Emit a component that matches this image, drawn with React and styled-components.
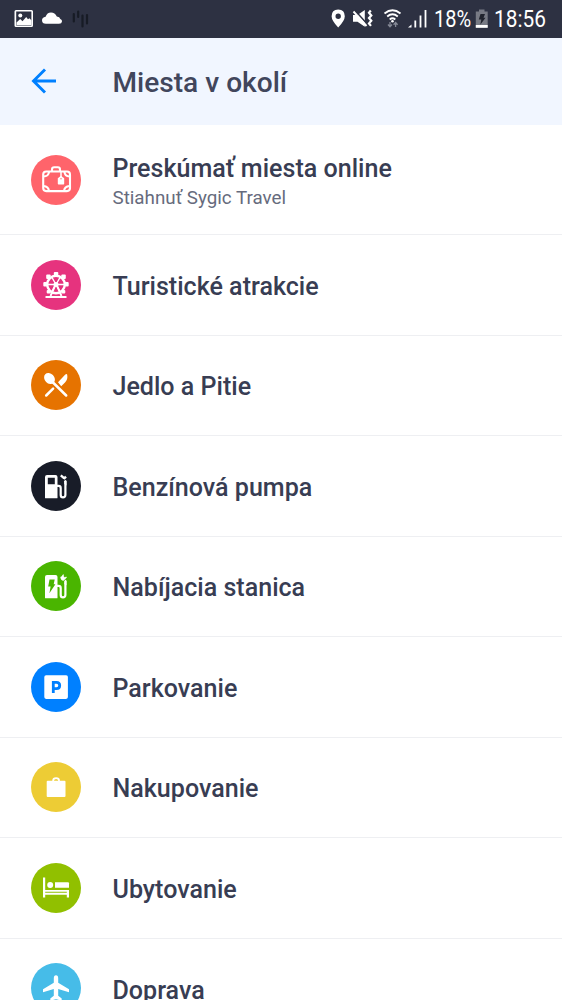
import React from 'react';
import styled, { createGlobalStyle } from 'styled-components';

const GlobalStyle = createGlobalStyle`
  * { box-sizing: border-box; }
  body { margin: 0; background: #fff; font-family: Roboto, "Noto Sans", sans-serif; }
`;

const Screen = styled.main`
  width: 562px;
  height: 1000px;
  overflow: hidden;
  background: #fff;
`;

const StatusBar = styled.div`
  height: 37.5px;
  display: flex;
  justify-content: space-between;
  background: #2d3142;
  color: #fff;
`;

const StatusIcons = styled.svg`
  display: block;
  width: ${(p) => p.$width}px;
  height: 37px;
  flex: none;
`;

const StatusGroup = styled.div`
  display: flex;
`;

const StatusText = styled.span`
  width: ${(p) => p.$width}px;
  font-size: 23px;
  line-height: 40px;
  white-space: nowrap;
  transform: scaleX(${(p) => p.$stretch});
  transform-origin: left;
`;

const Header = styled.header`
  height: 87.5px;
  display: flex;
  align-items: center;
  padding-left: 31px;
  background: #f1f6ff;
`;

const BackButton = styled.button`
  width: 81.5px;
  height: 26px;
  padding: 0;
  border: 0;
  background: none;
  text-align: left;
  svg { display: block; }
`;

const Title = styled.h1`
  margin: 4px 0 0;
  font-size: 28.1px;
  line-height: 36px;
  font-weight: 500;
  color: #41465c;
`;

const List = styled.ul`
  list-style: none;
  margin: 0;
  padding: 0;
`;

const Row = styled.li`
  height: ${(p) => (p.$tall ? 110 : 100.52)}px;
  display: flex;
  align-items: center;
  padding-left: 31px;
  border-bottom: 1px solid #eeeff2;
`;

const Badge = styled.svg`
  width: 50px;
  height: 50px;
  flex: none;
  margin-right: 31.5px;
  border-radius: 50%;
  background: ${(p) => p.$color};
`;

const Labels = styled.div`
  display: flex;
  flex-direction: column;
  padding-top: 4.3px;
`;

const Label = styled.span`
  font-size: 25.07px;
  line-height: 30px;
  font-weight: 500;
  color: #383d53;
`;

const Hint = styled.span`
  font-size: 18.8px;
  line-height: 24px;
  padding-top: 2px;
  color: #666b7d;
`;

const suitcase = (
  <g fill="none" stroke="#fff" strokeWidth="2.100">
    <rect x="12.200" y="16.500" width="26.800" height="19.600" rx="3" />
    <path d="M21 16.500v-2q0-2.200 2.200-2.200h3.600q2.200 0 2.200 2.200v2M18 17q-.5 4.500-5.500 4.500M12.500 31q5 .5 5.500 5M38.500 31q-5 .5-5.500 5M33.500 17q.3 4.200 5 4.500" />
    <path d="M30 17v6" strokeWidth="1.500" />
    <path d="M30 20.800l3.200 2.500v5.500q0 .7-.7.700h-5q-.7 0-.7-.7v-5.500z" fill="#fff" stroke="none" />
    <circle cx="30" cy="23.700" r=".7" fill="#ff646b" stroke="none" />
  </g>
);

const spokes = [0, 60, 120, 180, 240, 300];
const wheel = (
  <g fill="none" stroke="#fff">
    <circle cx="25" cy="24.500" r="8.800" strokeWidth="2.400" />
    {spokes.map((a) => (
      <g key={a} transform={`rotate(${a} 25 24.500)`}>
        <path d="M25 24.500h9" strokeWidth="1.400" />
      </g>
    ))}
    <g fill="#fff" stroke="none">
      <rect x="12.300" y="22" width="4.500" height="4.500" rx="1" />
      <rect x="33.200" y="22" width="4.500" height="4.500" rx="1" />
      <rect x="22.800" y="12" width="4.500" height="4" rx="1" />
      <rect x="15.200" y="14.500" width="4.500" height="4.500" rx="1" />
      <rect x="30.300" y="14.500" width="4.500" height="4.500" rx="1" />
      <rect x="15.700" y="30" width="4" height="3.500" rx="1" />
      <rect x="30.300" y="30" width="4" height="3.500" rx="1" />
      <circle cx="25" cy="24.500" r="2.500" />
      <path d="M15 36h20q.5 0 .5.500V38h-21v-1.500q0-.5.500-.5z" />
    </g>
    <path d="M24.300 25l-4.800 11M25.700 25l4.800 11" strokeWidth="1.900" />
  </g>
);

const cutlery = (
  <g fill="#fff">
    <ellipse cx="18.500" cy="18.500" rx="6" ry="4.800" transform="rotate(45 18.500 18.500)" />
    <path d="M20 20.500L35.200 35.500M15.200 35.500l6.900-6.900" stroke="#fff" strokeWidth="2.500" strokeLinecap="round" />
    <path d="M27 22.300l7.300-7.800q1.500-1.200 1.900.2.900 4.700-2.200 7.700l-3.800 3.800z" />
  </g>
);

const hose = (
  <path d="M26 24.800h1.500q2.200 0 2.200 2.200v7q0 2.400 2.300 2.400t2.400-2.400V19.800" fill="none" stroke="#fff" strokeWidth="2.200" />
);

const pump = (
  <g>
    <path fill="#fff" fillRule="evenodd" d="M16 14h8.500q2 0 2 2v20.700q0 .6-.6.6H14.700q-.7 0-.7-.6V16q0-2 2-2zM16.800 16.800v6.400h7v-6.400z" />
    {hose}
    <path fill="#fff" d="M34.200 18.700l1.300 1.200v4.500l-2.200-1.500v-2.700z" />
    <path fill="none" stroke="#fff" d="M29.800 14.300l3.500 3M35 15.600l-2.300 2.300" strokeWidth="2.400" />
  </g>
);

const charger = (
  <g>
    <path fill="#fff" d="M16 14h8.500q2 0 2 2v20.700q0 .6-.6.6H14.700q-.7 0-.7-.6V16q0-2 2-2z" />
    <path fill="#4ab500" d="M18.500 18.500h5.200l-1 4.700h1.700l-6 9 1.200-6.700h-2.400z" />
    {hose}
    <path fill="#fff" d="M29.300 16l2.700-1.600 2.800 3.100-2.300 2.200q-2.800-.2-3.200-3.700zM34 18.500l1.500 1.300v4.500l-2.200-1.300z" />
    <path stroke="#fff" strokeWidth="1.200" d="M31.400 15.300l1.200-1.600M34 17.300l1.500-1.300" />
  </g>
);

const parking = (
  <g>
    <rect x="13.300" y="13.300" width="23.600" height="23.600" rx="1.800" fill="#fff" />
    <path d="M22.300 31V20.400h3.200q3.200 0 3.200 3.100t-3.200 3.100h-3.200" fill="none" stroke="#0080ff" strokeWidth="2.800" />
  </g>
);

const bag = (
  <g>
    <path fill="#fff" d="M16.700 18.800h16.800q1 0 1 1v14.300q0 1-1 1H16.700q-1 0-1-1V19.800q0-1 1-1z" />
    <path d="M22.200 20v-1.500q0-2.400 2.900-2.400t2.900 2.400V20" fill="none" stroke="#fff" strokeWidth="1.800" />
  </g>
);

const bed = (
  <g fill="#fff">
    <path d="M12 14.500h2.200v12.500H38v7.500h-2.200v-2.800H14.200v2.800H12zM14.200 28.700v1.100h21.600v-1.100z" fillRule="evenodd" />
    <circle cx="19.200" cy="22" r="3" />
    <path d="M24 19.200h13q1 0 1 1v4.600H24z" />
  </g>
);

const plane = (
  <path fill="#fff" d="M25 12.300q2.200 0 2.200 3v4.400L38 26.200v3.100l-10.800-3.200v6.700l3.500 2.700v2.200L25 36.200l-5.700 1.500v-2.200l3.500-2.700v-6.700L12 29.300v-3.100l10.800-6.500v-4.400q0-3 2.200-3z" />
);

const categories = [
  { name: 'Preskúmať miesta online', hint: 'Stiahnuť Sygic Travel', color: '#ff646b', icon: suitcase },
  { name: 'Turistické atrakcie', color: '#e6337e', icon: wheel },
  { name: 'Jedlo a Pitie', color: '#e67300', icon: cutlery },
  { name: 'Benzínová pumpa', color: '#181c28', icon: pump },
  { name: 'Nabíjacia stanica', color: '#4ab500', icon: charger },
  { name: 'Parkovanie', color: '#0080ff', icon: parking },
  { name: 'Nakupovanie', color: '#edcc35', icon: bag },
  { name: 'Ubytovanie', color: '#91c000', icon: bed },
  { name: 'Doprava', color: '#46bce8', icon: plane },
];

export default function App() {
  return (
    <Screen>
      <GlobalStyle />
      <StatusBar>
        <StatusIcons $width={100} viewBox="0 0 100 37">
          <path fill="#fff" fillRule="evenodd" d="M16 10h15.500q1.500 0 1.500 1.500v14q0 1.500-1.500 1.500H16q-1.500 0-1.500-1.500v-14Q14.500 10 16 10zM16.200 11.500v14h15.200v-14z" />
          <circle cx="20.300" cy="15.500" r="2" fill="#fff" />
          <path fill="#fff" d="M16.500 25v-2.500l3.700-3.500 2.300 2.200 3.700-4.200 1.800 2.300 1.500-1 2 2.200V25z" />
          <path fill="#fff" d="M46 23.800q-4 0-4-3.500 0-3 3.600-3.600Q47 12.600 51 12.500q4 0 5.800 4 3 .2 3.500 2.500 2 .5 1.700 2.500-.2 2.300-3 2.300z" />
          <path stroke="#171b25" strokeWidth="2.200" strokeLinecap="round" d="M73.800 14v7.500M78.200 11.500V17M82.500 15.500v11M87 15v8.500" />
        </StatusIcons>
        <StatusGroup>
          <StatusIcons $width={104} viewBox="330 0 104 37">
            <path fill="#fff" fillRule="evenodd" d="M338.200 9.500q6.600.3 6.600 6.700 0 4.300-6.600 11.300-6.600-7-6.600-11.300 0-6.400 6.600-6.700zm0 4a2.700 2.700 0 1 0 0 5.400 2.700 2.700 0 0 0 0-5.400z" />
            <path fill="#fff" d="M353 15h4.500l7.300-5v16.800l-7.300-5H353z" />
            <path stroke="#2d3142" strokeWidth="1.800" d="M354.500 10l13 14.500" />
            <path stroke="#fff" strokeWidth="1.900" d="M353.500 11.500l13 14.500" />
            <path fill="none" stroke="#fff" strokeWidth="2.200" d="M370.800 10.500l-1.800 2.300 2.300 2.600-2.300 2.700 2.300 2.600-2.300 2.700 2 2.500" />
            <g fill="none" stroke="#fff" strokeWidth="1.800">
              <path d="M384.500 13.500q8-6.500 16 0M387.200 16.500q5.300-4.500 10.600 0M389.700 19.500q2.800-2.400 5.600 0" />
            </g>
            <circle cx="392.500" cy="21.300" r="1.300" fill="#fff" />
            <path fill="none" stroke="#858996" strokeWidth="1.300" d="M390 22v4.500M388 24.500l2 2.200 2-2.200M395.600 27v-4.500M393.600 24.700l2-2.200 2 2.200" />
            <path stroke="#fff" strokeWidth="1.800" d="M415.300 20.500v7M420.500 15.500v12M425.500 10v17.500" />
            <path fill="#fff" d="M408 27.500l3.500-3v3z" />
          </StatusIcons>
          <StatusText $width={40} $stretch={0.87}>18%</StatusText>
          <StatusIcons $width={20} viewBox="474 0 20 37">
            <path fill="#777a84" d="M479 9.500h5.500v2h3.200v16H475.800v-16h3.200z" />
            <path fill="#20232d" d="M480.500 14h4.500l-1.500 3.700h2l-5.200 7 1-5.200h-2.500z" />
            <path fill="#fff" d="M475.800 25h11.900v2.800h-11.900z" />
          </StatusIcons>
          <StatusText $width={68} $stretch={0.905}>18:56</StatusText>
        </StatusGroup>
      </StatusBar>
      <Header>
        <BackButton aria-label="Späť">
          <svg width="26" height="26" viewBox="0 0 26 26" fill="none" stroke="#0080ff" strokeWidth="2.900">
            <path d="M25 13H2.500M14 1.500L2.500 13 14 24.500" />
          </svg>
        </BackButton>
        <Title>Miesta v okolí</Title>
      </Header>
      <List>
        {categories.map((item) => (
          <Row key={item.name} $tall={Boolean(item.hint)}>
            <Badge $color={item.color} viewBox="0 0 50 50">{item.icon}</Badge>
            <Labels>
              <Label>{item.name}</Label>
              {item.hint && <Hint>{item.hint}</Hint>}
            </Labels>
          </Row>
        ))}
      </List>
    </Screen>
  );
}
